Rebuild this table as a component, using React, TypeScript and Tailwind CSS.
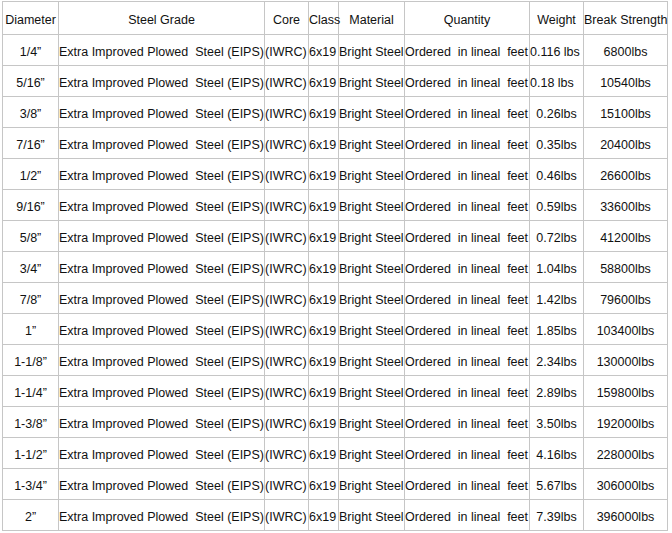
import React from 'react';

interface RopeRow {
  diameter: string;
  weight: string;
  strength: string;
}

const rows: RopeRow[] = [
  { diameter: '1/4\u201d', weight: '0.116 lbs', strength: '6800lbs' },
  { diameter: '5/16\u201d', weight: '0.18 lbs', strength: '10540lbs' },
  { diameter: '3/8\u201d', weight: '0.26lbs', strength: '15100lbs' },
  { diameter: '7/16\u201d', weight: '0.35lbs', strength: '20400lbs' },
  { diameter: '1/2\u201d', weight: '0.46lbs', strength: '26600lbs' },
  { diameter: '9/16\u201d', weight: '0.59lbs', strength: '33600lbs' },
  { diameter: '5/8\u201d', weight: '0.72lbs', strength: '41200lbs' },
  { diameter: '3/4\u201d', weight: '1.04lbs', strength: '58800lbs' },
  { diameter: '7/8\u201d', weight: '1.42lbs', strength: '79600lbs' },
  { diameter: '1\u201d', weight: '1.85lbs', strength: '103400lbs' },
  { diameter: '1-1/8\u201d', weight: '2.34lbs', strength: '130000lbs' },
  { diameter: '1-1/4\u201d', weight: '2.89lbs', strength: '159800lbs' },
  { diameter: '1-3/8\u201d', weight: '3.50lbs', strength: '192000lbs' },
  { diameter: '1-1/2\u201d', weight: '4.16lbs', strength: '228000lbs' },
  { diameter: '1-3/4\u201d', weight: '5.67lbs', strength: '306000lbs' },
  { diameter: '2\u201d', weight: '7.39lbs', strength: '396000lbs' },
];

// tight cells, text sits a bit below the middle like the old table
const cell = 'border border-[#c6c6c6] px-0 pt-1 pb-0 whitespace-pre';

export default function App() {
  return (
    <div className="bg-white w-[672px] h-[533px] pt-px pl-[2px] text-[12.5px] text-[#111] font-['Liberation_Sans',Arial,sans-serif] leading-none">
      <table className="table-fixed border-collapse w-[666px]">
        <colgroup>
          <col className="w-[56px]" />
          <col className="w-[206px]" />
          <col className="w-[44px]" />
          <col className="w-[30px]" />
          <col className="w-[66px]" />
          <col className="w-[125px]" />
          <col className="w-[54px]" />
          <col className="w-[84px]" />
        </colgroup>
        <thead>
          <tr className="h-[33px]">
            <th className={`${cell} font-normal text-center`}>Diameter</th>
            <th className={`${cell} font-normal text-center`}>Steel Grade</th>
            <th className={`${cell} font-normal text-center`}>Core</th>
            <th className={`${cell} font-normal text-center`}>Class</th>
            <th className={`${cell} font-normal text-center`}>Material</th>
            <th className={`${cell} font-normal text-center`}>Quantity</th>
            <th className={`${cell} font-normal text-center`}>Weight</th>
            <th className={`${cell} font-normal text-center`}>Break Strength</th>
          </tr>
        </thead>
        <tbody>
          {rows.map((r) => (
            <tr key={r.diameter} className="h-[31px]">
              <td className={`${cell} text-center`}>{r.diameter}</td>
              <td className={cell}>Extra Improved Plowed  Steel (EIPS)</td>
              <td className={cell}>(IWRC)</td>
              <td className={cell}>6x19</td>
              <td className={cell}>Bright Steel</td>
              <td className={cell}>Ordered  in lineal  feet</td>
              <td className={`${cell} ${r.weight.includes(' ') ? 'text-left' : 'text-center'}`}>{r.weight}</td>
              <td className={`${cell} text-center`}>{r.strength}</td>
            </tr>
          ))}
        </tbody>
      </table>
    </div>
  );
}
